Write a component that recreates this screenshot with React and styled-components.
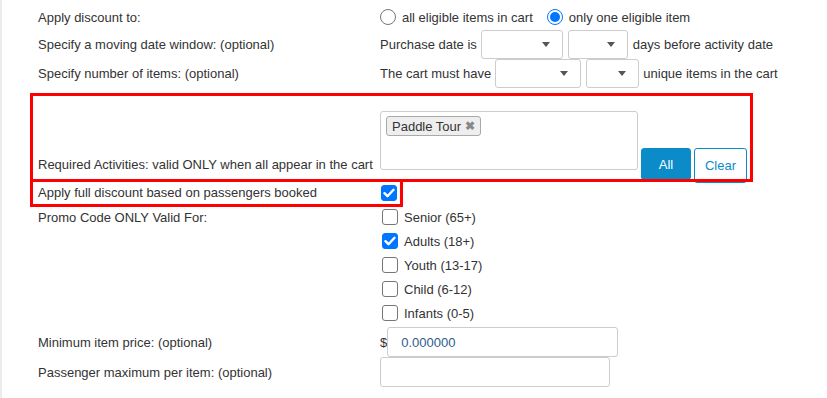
import React from 'react';
import styled, { createGlobalStyle } from 'styled-components';

const GlobalStyle = createGlobalStyle`
  html, body {
    margin: 0;
    padding: 0;
    background: #ffffff;
  }
  body {
    font-family: 'Liberation Sans', Arial, sans-serif;
  }
`;

const Page = styled.div`
  position: relative;
  width: 827px;
  height: 398px;
  box-sizing: border-box;
  border-left: 2px solid #ececec;
  padding: 4px 0 0 36px;
  font-size: 13px;
  color: #333333;
  overflow: hidden;
`;

const Row = styled.div`
  display: grid;
  grid-template-columns: 342px 1fr;
  align-items: ${(p) => p.$align || 'center'};
  min-height: ${(p) => p.$h || 29}px;
  margin-top: ${(p) => p.$mt || 0}px;
`;

const Label = styled.div`
  align-self: ${(p) => p.$self || 'auto'};
  padding-bottom: ${(p) => p.$pb || 0}px;
  padding-top: ${(p) => p.$pt || 0}px;
`;

const Inline = styled.div`
  display: flex;
  align-items: ${(p) => p.$align || 'center'};
  gap: ${(p) => p.$gap ?? 4}px;
`;

const Text = styled.span`
  margin-left: ${(p) => p.$ml || 0}px;
`;

const RadioOption = styled.label`
  display: flex;
  align-items: center;
  gap: 6px;
  margin-right: 10px;
`;

const Radio = styled.span`
  width: 14px;
  height: 14px;
  border-radius: 50%;
  border: 1px solid ${(p) => (p.$on ? '#0075ff' : '#767676')};
  display: flex;
  align-items: center;
  justify-content: center;
  &::after {
    content: '';
    display: ${(p) => (p.$on ? 'block' : 'none')};
    width: 10px;
    height: 10px;
    border-radius: 50%;
    background: #0075ff;
  }
`;

const Select = styled.div`
  box-sizing: border-box;
  width: ${(p) => p.$w}px;
  height: 29px;
  margin-left: ${(p) => p.$ml || 0}px;
  border: 1px solid #cccccc;
  border-radius: 3px;
  background: #fff;
  display: flex;
  align-items: center;
  justify-content: flex-end;
  padding-right: 12px;
  &::after {
    content: '';
    border-left: 4px solid transparent;
    border-right: 4px solid transparent;
    border-top: 5px solid #555555;
  }
`;

const MultiSelect = styled.div`
  box-sizing: border-box;
  width: 258px;
  height: 59px;
  border: 1px solid #cccccc;
  border-radius: 3px;
  padding: 4px 5px;
  margin-bottom: 10px;
`;

const Tag = styled.span`
  display: inline-flex;
  align-items: center;
  gap: 4px;
  height: 20px;
  box-sizing: border-box;
  padding: 0 5px;
  background: #eeeeee;
  border: 1px solid #aaaaaa;
  border-radius: 3px;
  color: #333;
`;

const TagClose = styled.span`
  color: #888888;
  font-weight: bold;
  font-size: 12px;
`;

const Button = styled.button`
  box-sizing: border-box;
  height: ${(p) => p.$h}px;
  width: ${(p) => p.$w}px;
  margin: 0;
  font-family: 'Liberation Sans', Arial, sans-serif;
  font-size: 13px;
  border-radius: 3px;
  border: 1px solid #0b8bc8;
  background: ${(p) => (p.$primary ? '#0b8bc8' : '#ffffff')};
  color: ${(p) => (p.$primary ? '#ffffff' : '#0b8bc8')};
  padding: 0;
`;

const ButtonGroup = styled.div`
  display: flex;
  gap: 3px;
  margin-left: 3px;
  height: 32px;
  align-items: flex-start;
  align-self: flex-end;
`;

const Check = styled.span`
  box-sizing: border-box;
  width: 16px;
  height: 16px;
  border-radius: 3px;
  border: 1px solid ${(p) => (p.$on ? '#0075ff' : '#767676')};
  background: ${(p) => (p.$on ? '#0075ff' : '#fff')};
  display: flex;
  align-items: center;
  justify-content: center;
  flex: none;
  margin-left: ${(p) => p.$ml || 0}px;
`;

const CheckItem = styled.label`
  display: flex;
  align-items: center;
  gap: 6px;
  height: 24px;
  padding-left: 2px;
`;

const CheckList = styled.div`
  display: flex;
  flex-direction: column;
`;

const TextInput = styled.div`
  box-sizing: border-box;
  width: ${(p) => p.$w}px;
  height: 30px;
  border: 1px solid #cccccc;
  border-radius: 3px;
  background: #fff;
  padding-left: 13px;
  display: flex;
  align-items: center;
  color: #2d5c8e;
`;

const Highlight = styled.div`
  position: absolute;
  left: ${(p) => p.$x}px;
  top: ${(p) => p.$y}px;
  width: ${(p) => p.$w}px;
  height: ${(p) => p.$h}px;
  border: 3px solid #ff0000;
  box-sizing: border-box;
  pointer-events: none;
`;

const Tick = () => (
  <svg width="12" height="10" viewBox="0 0 12 10">
    <path d="M1.5 5.2 L4.5 8.2 L10.5 1.8" stroke="#fff" strokeWidth="2.4" fill="none" strokeLinecap="round" strokeLinejoin="round" />
  </svg>
);

const passengers = [
  { label: 'Senior (65+)', on: false },
  { label: 'Adults (18+)', on: true },
  { label: 'Youth (13-17)', on: false },
  { label: 'Child (6-12)', on: false },
  { label: 'Infants (0-5)', on: false },
];

export default function App() {
  return (
    <>
      <GlobalStyle />
      <Page>
        <Row $h={26}>
          <Label>Apply discount to:</Label>
          <Inline>
            <RadioOption>
              <Radio />
              all eligible items in cart
            </RadioOption>
            <RadioOption>
              <Radio $on />
              only one eligible item
            </RadioOption>
          </Inline>
        </Row>
        <Row>
          <Label>Specify a moving date window: (optional)</Label>
          <Inline $gap={4}>
            <Text>Purchase date is</Text>
            <Select $w={82} />
            <Select $w={60} $ml={1} />
            <Text $ml={1}>days before activity date</Text>
          </Inline>
        </Row>
        <Row>
          <Label>Specify number of items: (optional)</Label>
          <Inline $gap={4}>
            <Text>The cart must have</Text>
            <Select $w={86} />
            <Select $w={53} $ml={1} />
            <Text>unique items in the cart</Text>
          </Inline>
        </Row>
        <Row $h={84} $mt={8} $align="stretch">
          <Label $self="end" $pb={8}>Required Activities: valid ONLY when all appear in the cart</Label>
          <Inline $align="flex-end" $gap={0}>
            <MultiSelect>
              <Tag>
                Paddle Tour <TagClose>✖</TagClose>
              </Tag>
            </MultiSelect>
            <ButtonGroup>
              <Button $primary $w={50} $h={32}>All</Button>
              <Button $w={53} $h={35}>Clear</Button>
            </ButtonGroup>
          </Inline>
        </Row>
        <Row $h={23} $mt={1}>
          <Label>Apply full discount based on passengers booked</Label>
          <Inline>
            <Check $on $ml={1}>
              <Tick />
            </Check>
          </Inline>
        </Row>
        <Row $align="start" $mt={1}>
          <Label $pt={5}>Promo Code ONLY Valid For:</Label>
          <CheckList>
            {passengers.map((p) => (
              <CheckItem key={p.label}>
                <Check $on={p.on}>{p.on && <Tick />}</Check>
                {p.label}
              </CheckItem>
            ))}
          </CheckList>
        </Row>
        <Row $h={30} $mt={2}>
          <Label>Minimum item price: (optional)</Label>
          <Inline $gap={0}>
            <Text>$</Text>
            <TextInput $w={231}>0.000000</TextInput>
          </Inline>
        </Row>
        <Row $h={30}>
          <Label>Passenger maximum per item: (optional)</Label>
          <Inline>
            <TextInput $w={230} />
          </Inline>
        </Row>
        <Highlight $x={28} $y={93} $w={723} $h={89} />
        <Highlight $x={28} $y={179} $w={373} $h={28} />
      </Page>
    </>
  );
}
